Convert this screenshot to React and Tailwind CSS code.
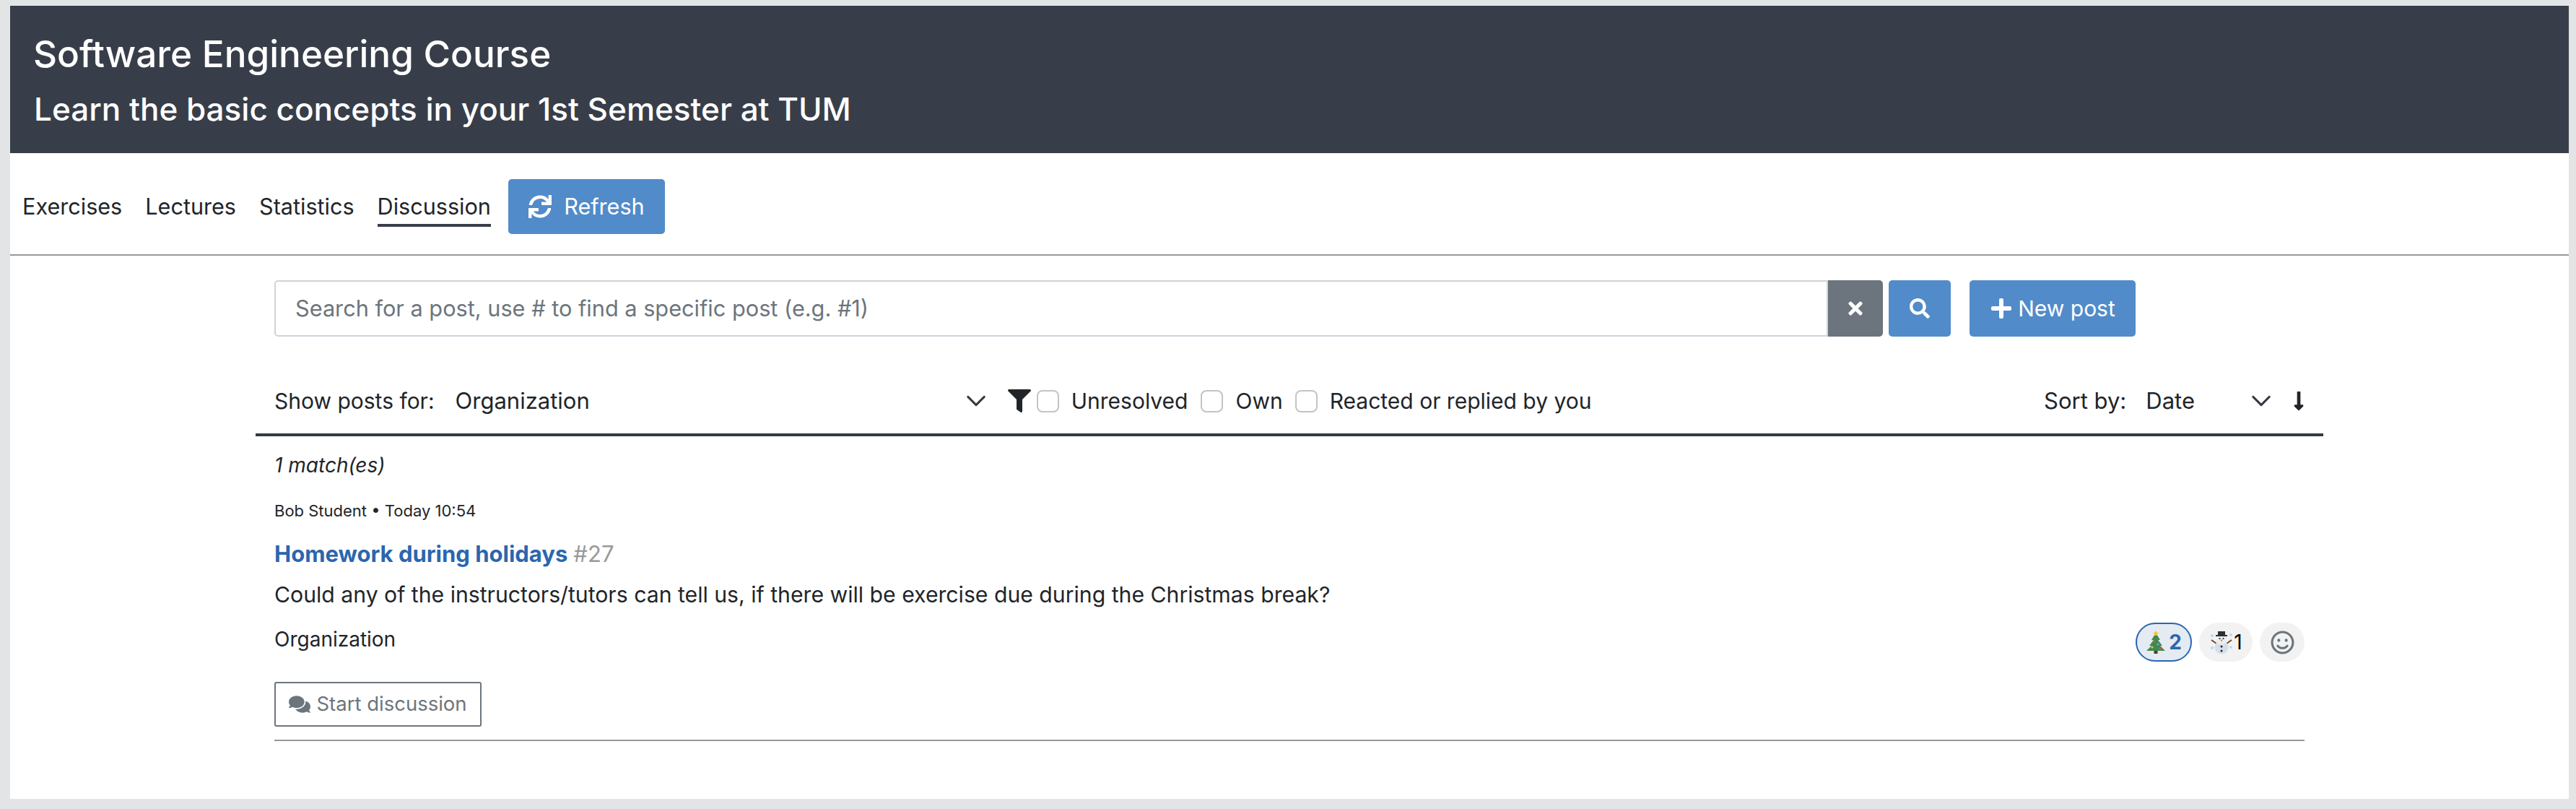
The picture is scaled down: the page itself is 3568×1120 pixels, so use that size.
import { FaComments, FaFilter, FaLongArrowAltDown, FaPlus, FaRegSmile, FaSearch, FaSync, FaTimes } from "react-icons/fa";

function Chevron() {
  return (
    <svg width="30" height="30" viewBox="0 0 16 16" fill="none" stroke="#343a40" strokeWidth="1.6" strokeLinecap="round" strokeLinejoin="round">
      <path d="M2 5l6 6 6-6" />
    </svg>
  );
}

function Tree() {
  return (
    <svg width="28" height="34" viewBox="0 0 28 34">
      <rect x="11.5" y="27" width="5" height="6" fill="#5b3a24" />
      <path d="M14 4L8 14h3L5 22h3L1 29h26l-7-7h3l-6-8h3z" fill="#3f8a4c" />
      <path d="M14 1l1.2 2.6 2.8.3-2 1.9.5 2.8L14 7.2l-2.5 1.4.5-2.8-2-1.9 2.8-.3z" fill="#f5c33b" />
      <circle cx="11" cy="16" r="1.6" fill="#e0584c" />
      <circle cx="17" cy="20" r="1.6" fill="#6fa8dc" />
      <circle cx="9" cy="24" r="1.6" fill="#f5c33b" />
      <circle cx="20" cy="26" r="1.6" fill="#e0584c" />
    </svg>
  );
}

function Snowman() {
  return (
    <svg width="34" height="34" viewBox="0 0 34 34">
      <circle cx="4" cy="8" r="2" fill="#bcd8ee" />
      <circle cx="30" cy="7" r="2" fill="#bcd8ee" />
      <circle cx="4" cy="25" r="2" fill="#bcd8ee" />
      <circle cx="30" cy="24" r="2" fill="#bcd8ee" />
      <path d="M10 19L3 14M24 19l7-5" stroke="#6b4226" strokeWidth="1.8" />
      <circle cx="17" cy="24" r="9.5" fill="#d5dfea" />
      <circle cx="17" cy="13" r="7.5" fill="#e8eef4" />
      <path d="M12 7V2h10v5h3v2H9V7z" fill="#2f2f33" />
      <circle cx="14.5" cy="12" r="1.1" fill="#222" />
      <circle cx="19.5" cy="12" r="1.1" fill="#222" />
      <circle cx="17" cy="14.5" r="1.3" fill="#e8843c" />
      <circle cx="17" cy="23" r="1.5" fill="#222" />
      <circle cx="17" cy="29" r="1.5" fill="#222" />
    </svg>
  );
}

function Check({ label, className }) {
  return (
    <label className={`flex items-center ${className}`}>
      <span className="h-[31px] w-[31px] rounded-[8px] border-2 border-[#c4c4c4] bg-white" />
      <span className="ml-[17px]">{label}</span>
    </label>
  );
}

export default function App() {
  return (
    <div className="h-[1120px] overflow-hidden bg-[#e3e4e6] pt-[8px] pr-[10px] pb-[14px] pl-[14px] font-['Inter',sans-serif] text-[#212529]">
      <div className="h-full bg-white">
        <header className="h-[204px] bg-[#383e49] pt-[30px] pl-[33px] text-white">
          <h1 className="-ml-[1px] text-[51.2px] leading-[72px] font-medium">Software Engineering Course</h1>
          <h2 className="mt-[11px] text-[44px] leading-[60px] font-medium">Learn the basic concepts in your 1st Semester at TUM</h2>
        </header>

        <nav className="flex h-[142px] items-center border-b-2 border-[#999] pt-[8px] pl-[17px] text-[30.6px]">
          <a className="mr-[32px]">Exercises</a>
          <a className="mr-[32px]">Lectures</a>
          <a className="mr-[32px]">Statistics</a>
          <a className="mr-[24px] border-b-4 border-[#383e49] pt-[4px] leading-[48px]">Discussion</a>
          <button className="flex h-[76px] w-[217px] items-center justify-center gap-[17px] rounded-[5px] bg-[#528bc9] text-white">
            <FaSync className="text-[32px]" />
            Refresh
          </button>
        </nav>

        <main className="pt-[34px] pl-[340px]">
          <div className="flex h-[78px] w-[2604px] items-stretch pl-[26px] text-[30px]">
            <div className="flex w-[2152px] items-center rounded-l-[5px] border-2 border-[#ced4da] pl-[27px] text-[30.7px] text-[#6c757d]">
              Search for a post, use # to find a specific post (e.g. #1)
            </div>
            <button className="flex w-[76px] items-center justify-center rounded-r-[5px] bg-[#6c757d] text-white">
              <FaTimes className="text-[28px]" />
            </button>
            <button className="ml-[8px] flex w-[86px] items-center justify-center rounded-[5px] bg-[#528bc9] text-white">
              <FaSearch className="text-[28px]" />
            </button>
            <button className="ml-[26px] flex w-[230px] items-center justify-center gap-[7px] rounded-[5px] bg-[#528bc9] text-white">
              <FaPlus className="text-[32px]" />
              New post
            </button>
          </div>

          <div className="flex h-[138px] w-[2864px] items-center border-b-4 border-[#343a40] pt-[44px] pl-[26px] text-[30px]">
            <span>Show posts for:</span>
            <span className="ml-[29px] text-[31px]">Organization</span>
            <span className="ml-[520px]"><Chevron /></span>
            <FaFilter className="ml-[29px] text-[32px] text-[#212529]" />
            <Check label="Unresolved" className="ml-[8px]" />
            <Check label="Own" className="ml-[18px]" />
            <Check label="Reacted or replied by you" className="ml-[17px]" />
            <span className="ml-auto text-[31px]">Sort by:</span>
            <span className="ml-[27px] text-[31px]">Date</span>
            <span className="ml-[77px]"><Chevron /></span>
            <FaLongArrowAltDown className="mr-[19px] ml-[22px] text-[30px]" />
          </div>

          <div className="w-[2838px] pl-[26px]">
            <p className="mt-[23px] text-[28px] leading-[34px] italic">1 match(es)</p>
            <p className="mt-[32px] text-[22px] leading-[28px]">Bob Student • Today 10:54</p>
            <p className="mt-[26px] text-[31px] leading-[40px]">
              <span className="font-bold text-[#2b66ae]">Homework during holidays</span>
              <span className="ml-[8px] text-[#999]">#27</span>
            </p>
            <p className="mt-[16px] text-[30.2px] leading-[40px]">Could any of the instructors/tutors can tell us, if there will be exercise due during the Christmas break?</p>
            <div className="mt-[20px] flex items-start justify-between">
              <p className="text-[28px] leading-[44px]">Organization</p>
              <div className="-mt-[1px] flex h-[54px] gap-[10px]">
                <span className="flex w-[78px] items-center justify-center gap-[4px] rounded-full border-2 border-[#2b66ae] bg-[#e4ebf3] text-[28px] font-bold text-[#2b66ae]">
                  <Tree />2
                </span>
                <span className="flex w-[74px] items-center justify-center rounded-full bg-[#f2f2f2] text-[28px] text-black">
                  <Snowman />1
                </span>
                <span className="flex w-[62px] items-center justify-center rounded-full bg-[#f2f2f2] text-[#6c757d]">
                  <FaRegSmile className="text-[33px]" />
                </span>
              </div>
            </div>
            <button className="mt-[28px] flex h-[62px] w-[287px] items-center justify-center gap-[8px] rounded-[3px] border-2 border-[#6c757d] text-[27.5px] text-[#6c757d]">
              <FaComments className="text-[30px]" />
              Start discussion
            </button>
            <div className="mt-[18px] border-b-2 border-[#999]" />
          </div>
        </main>
      </div>
    </div>
  );
}
